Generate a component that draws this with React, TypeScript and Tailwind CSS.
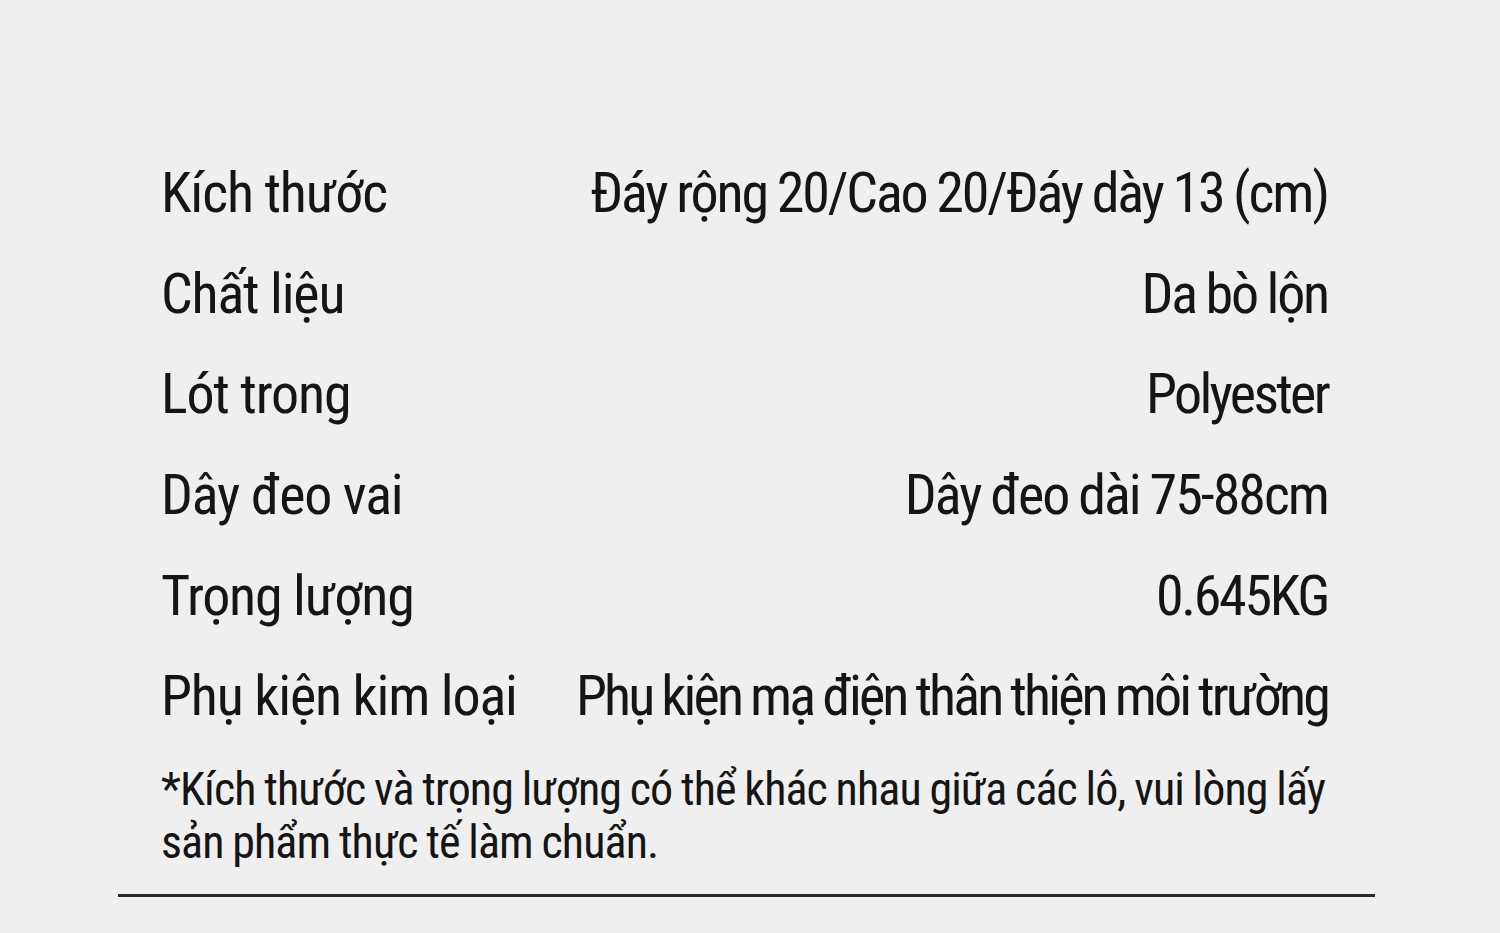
const specs = [
  { label: "Kích thước", value: "Đáy rộng 20/Cao 20/Đáy dày 13 (cm)", tight: "tracking-[-2.15px]" },
  { label: "Chất liệu", value: "Da bò lộn", tight: "tracking-[-2.2px]" },
  { label: "Lót trong", value: "Polyester", tight: "tracking-[-2.7px]" },
  { label: "Dây đeo vai", value: "Dây đeo dài 75-88cm", tight: "tracking-[-2px]" },
  { label: "Trọng lượng", value: "0.645KG", tight: "tracking-[-2.3px]" },
  { label: "Phụ kiện kim loại", value: "Phụ kiện mạ điện thân thiện môi trường", tight: "tracking-[-2.9px]" },
]

export default function App() {
  return (
    <div className="h-[933px] w-[1500px] overflow-hidden bg-[#efefef] font-['Roboto_Condensed',sans-serif] text-[#151515]">
      <div className="pl-[161px] pr-[172px] pt-[143px]">
        {specs.map((s) => (
          <div
            key={s.label}
            className="flex h-[100.6px] items-center justify-between whitespace-nowrap text-[56px] leading-[100px]"
          >
            <span className="tracking-[-1.2px]">{s.label}</span>
            <span className={`${s.tight} [word-spacing:-1px]`}>{s.value}</span>
          </div>
        ))}
        <p className="mt-[16px] whitespace-nowrap text-[46px] leading-[53px] tracking-[-0.9px] [word-spacing:-1px]">
          *Kích thước và trọng lượng có thể khác nhau giữa các lô, vui lòng lấy
          <br />
          sản phẩm thực tế làm chuẩn.
        </p>
      </div>
      <div className="ml-[118px] mr-[125px] mt-[25px] h-[3px] bg-[#2a2a2a]" />
    </div>
  )
}
